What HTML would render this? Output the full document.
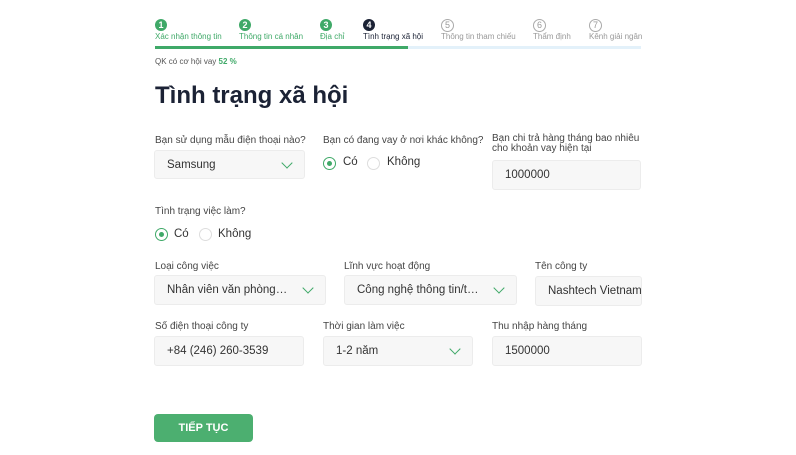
<!DOCTYPE html>
<html><head><meta charset="utf-8"><style>
body{margin:0;width:796px;height:455px;background:#fff;font-family:"Liberation Sans",sans-serif;position:relative;overflow:hidden}
.a{position:absolute;white-space:nowrap}
.c{position:absolute;width:12px;height:12px;border-radius:50%;font-size:9px;font-weight:bold;color:#fff;text-align:center;line-height:12px}
.g{background:#3fa968}.n{background:#1b2235}
.o{background:#fff;border:1px solid #aaa;color:#999;width:11px;height:11px;line-height:11px;font-weight:normal}
.sl{font-size:8px;top:32px}
.lb{font-size:10px;color:#444}
.bx{position:absolute;background:#f7f7f7;border:1px solid #ececec;border-radius:3px;box-sizing:border-box;font-size:11.5px;color:#333;padding-left:12px;line-height:28px;white-space:nowrap}
.bx span{display:block;overflow:hidden;text-overflow:ellipsis;width:calc(100% - 36px)}
.ch{position:absolute;right:13px;top:8px;width:7px;height:7px;border-right:1.3px solid #3fa968;border-bottom:1.3px solid #3fa968;transform:rotate(45deg)}
.r{position:absolute;width:11px;height:11px;border-radius:50%;border:1px solid #ddd;background:#fff}
.r.on{border-color:#3fa968}
.r.on::after{content:"";position:absolute;left:3px;top:3px;width:5px;height:5px;border-radius:50%;background:#3fa968}
.rt{position:absolute;font-size:11.5px;color:#333}
</style></head><body>
<div class="c g" style="left:155px;top:19px">1</div>
<div class="c g" style="left:239px;top:19px">2</div>
<div class="c g" style="left:320px;top:19px">3</div>
<div class="c n" style="left:363px;top:19px">4</div>
<div class="c o" style="left:441px;top:19px">5</div>
<div class="c o" style="left:533px;top:19px">6</div>
<div class="c o" style="left:589px;top:19px">7</div>
<div class="a sl" style="left:155px;color:#3fa968">Xác nhận thông tin</div>
<div class="a sl" style="left:239px;color:#3fa968">Thông tin cá nhân</div>
<div class="a sl" style="left:320px;color:#3fa968">Địa chỉ</div>
<div class="a sl" style="left:363px;color:#1b2235">Tình trạng xã hội</div>
<div class="a sl" style="left:441px;color:#999">Thông tin tham chiếu</div>
<div class="a sl" style="left:533px;color:#999">Thẩm định</div>
<div class="a sl" style="left:589px;color:#999">Kênh giải ngân</div>
<div class="a" style="left:155px;top:46px;width:486px;height:3px;background:#e3f1fa"></div>
<div class="a" style="left:155px;top:46px;width:253px;height:3px;background:#3fa968"></div>
<div class="a" style="left:155px;top:57px;font-size:8px;color:#555">QK có cơ hội vay <b style="color:#3fa968">52 %</b></div>
<div class="a" style="left:155px;top:82px;font-size:24px;font-weight:bold;color:#1b2235">Tình trạng xã hội</div>

<div class="a lb" style="left:155px;top:135px">Bạn sử dụng mẫu điện thoại nào?</div>
<div class="bx" style="left:154px;top:150px;width:151px;height:29px">Samsung<div class="ch"></div></div>
<div class="a lb" style="left:323px;top:135px">Bạn có đang vay ở nơi khác không?</div>
<div class="r on" style="left:323px;top:157px"></div><div class="rt" style="left:343px;top:156px">Có</div>
<div class="r" style="left:367px;top:157px"></div><div class="rt" style="left:387px;top:156px">Không</div>
<div class="a lb" style="left:492px;top:134px;line-height:10px">Bạn chi trả hàng tháng bao nhiêu<br>cho khoản vay hiện tại</div>
<div class="bx" style="left:492px;top:160px;width:149px;height:30px">1000000</div>

<div class="a lb" style="left:155px;top:206px">Tình trạng việc làm?</div>
<div class="r on" style="left:155px;top:228px"></div><div class="rt" style="left:174px;top:228px">Có</div>
<div class="r" style="left:199px;top:228px"></div><div class="rt" style="left:218px;top:228px">Không</div>

<div class="a lb" style="left:155px;top:261px">Loại công việc</div>
<div class="bx" style="left:154px;top:275px;width:172px;height:30px"><span>Nhân viên văn phòng (chuyên viên)</span><div class="ch"></div></div>
<div class="a lb" style="left:344px;top:261px">Lĩnh vực hoạt động</div>
<div class="bx" style="left:344px;top:275px;width:173px;height:30px"><span>Công nghệ thông tin/thiết kế</span><div class="ch"></div></div>
<div class="a lb" style="left:535px;top:261px">Tên công ty</div>
<div class="bx" style="left:535px;top:276px;width:107px;height:30px">Nashtech Vietnam</div>

<div class="a lb" style="left:155px;top:321px">Số điện thoại công ty</div>
<div class="bx" style="left:154px;top:336px;width:150px;height:30px">+84 (246) 260-3539</div>
<div class="a lb" style="left:323px;top:321px">Thời gian làm việc</div>
<div class="bx" style="left:323px;top:336px;width:150px;height:30px">1-2 năm<div class="ch"></div></div>
<div class="a lb" style="left:492px;top:321px">Thu nhập hàng tháng</div>
<div class="bx" style="left:492px;top:336px;width:150px;height:30px">1500000</div>

<div class="a" style="left:154px;top:414px;width:99px;height:28px;background:#4caf70;border-radius:4px;color:#fff;font-size:11px;font-weight:bold;text-align:center;line-height:28px">TIẾP TỤC</div>
</body></html>
